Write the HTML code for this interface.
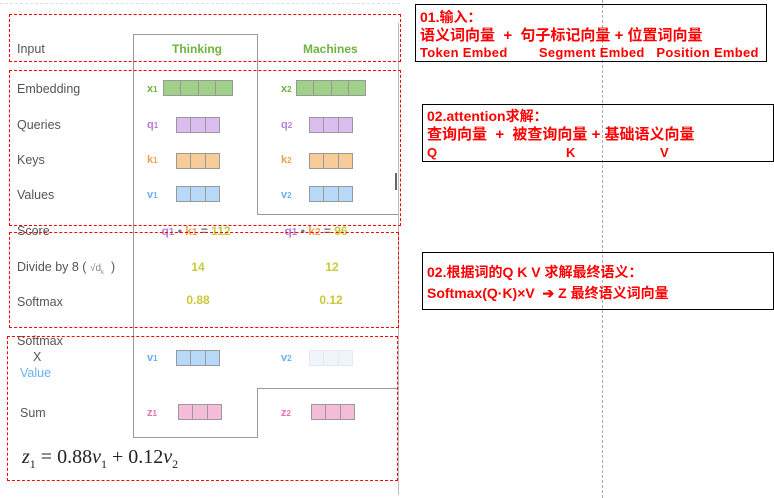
<!DOCTYPE html><html><head><meta charset="utf-8"><style>
body{margin:0;width:774px;height:498px;background:#fff;position:relative;overflow:hidden;font-family:"Liberation Sans","Noto Sans CJK SC",sans-serif}
.a{position:absolute}
.l{position:absolute;left:17px;font-size:12.5px;color:#555;line-height:14px}
.rd{position:absolute;border:1px dashed #f00}
.g{position:absolute;background:#999}
.bar{position:absolute;display:flex;border:1px solid #999;height:14px}
.bar i{flex:1;border-right:1px solid #999}.bar i:last-child{border-right:0}
.v{position:absolute;font-size:11px;font-weight:bold;line-height:14px}
.v small{font-size:8px}
.c{position:absolute;font-size:12px;font-weight:bold;color:#c9c93a;transform:translateX(-50%);line-height:14px}
.bx{position:absolute;border:1px solid #000;color:#f00;font-weight:bold;font-family:"Liberation Sans","Noto Sans CJK SC",sans-serif}
.bx div{position:absolute;white-space:pre;left:4px}
</style></head><body>
<div class="a" style="left:0;top:3px;width:400px;border-top:1px dashed #ddd"></div>
<div class="a" style="left:602px;top:0;height:498px;border-left:1px dashed #aaa"></div>
<div class="g" style="left:133px;top:34px;width:124px;height:1px"></div>
<div class="g" style="left:133px;top:34px;width:1px;height:403px"></div>
<div class="g" style="left:257px;top:34px;width:1px;height:180px"></div>
<div class="g" style="left:257px;top:214px;width:142px;height:1px"></div>
<div class="g" style="left:133px;top:437px;width:125px;height:1px"></div>
<div class="g" style="left:257px;top:388px;width:1px;height:50px"></div>
<div class="g" style="left:257px;top:388px;width:142px;height:1px"></div>
<div class="g" style="left:398px;top:23px;width:1px;height:472px;background:#bbb"></div>
<div class="g" style="left:395px;top:173px;width:2px;height:17px;background:#666"></div>
<div class="l" style="top:42px">Input</div>
<div class="l" style="top:82px">Embedding</div>
<div class="l" style="top:118px">Queries</div>
<div class="l" style="top:153px">Keys</div>
<div class="l" style="top:188px">Values</div>
<div class="l" style="top:224px">Score</div>
<div class="l" style="top:260px">Divide by 8 ( <span style="font-size:10px;color:#888">√d<sub style="font-size:6px">k</sub></span> &nbsp;)</div>
<div class="l" style="top:295px">Softmax</div>
<div class="l" style="top:334px">Softmax</div>
<div class="l" style="top:350px;left:33px">X</div>
<div class="l" style="top:366px;left:20px;color:#6ab0f0">Value</div>
<div class="l" style="top:406px;left:20px">Sum</div>
<div class="a" style="left:172px;top:42px;font-size:12px;font-weight:bold;color:#6db33f">Thinking</div>
<div class="a" style="left:303px;top:42px;font-size:12px;font-weight:bold;color:#6db33f">Machines</div>
<div class="v" style="left:147px;top:82px;color:#6db33f">x<small>1</small></div>
<div class="bar" style="left:163px;top:80px;width:68px;background:#9fd18a"><i></i><i></i><i></i><i></i></div>
<div class="v" style="left:281px;top:82px;color:#6db33f">x<small>2</small></div>
<div class="bar" style="left:296px;top:80px;width:68px;background:#9fd18a"><i></i><i></i><i></i><i></i></div>
<div class="v" style="left:147px;top:118px;color:#b57edc">q<small>1</small></div>
<div class="bar" style="left:176px;top:117px;width:42px;background:#dcbdf0"><i></i><i></i><i></i></div>
<div class="v" style="left:281px;top:118px;color:#b57edc">q<small>2</small></div>
<div class="bar" style="left:309px;top:117px;width:42px;background:#dcbdf0"><i></i><i></i><i></i></div>
<div class="v" style="left:147px;top:153px;color:#f0a050">k<small>1</small></div>
<div class="bar" style="left:176px;top:153px;width:42px;background:#f8cc98"><i></i><i></i><i></i></div>
<div class="v" style="left:281px;top:153px;color:#f0a050">k<small>2</small></div>
<div class="bar" style="left:309px;top:153px;width:42px;background:#f8cc98"><i></i><i></i><i></i></div>
<div class="v" style="left:147px;top:188px;color:#6ab0f0">v<small>1</small></div>
<div class="bar" style="left:176px;top:186px;width:42px;background:#b8d8f8"><i></i><i></i><i></i></div>
<div class="v" style="left:281px;top:188px;color:#6ab0f0">v<small>2</small></div>
<div class="bar" style="left:309px;top:186px;width:42px;background:#b8d8f8"><i></i><i></i><i></i></div>
<div class="c" style="left:196px;top:224px"><span style="color:#b57edc">q<small>1</small></span> <span style="color:#777">•</span> <span style="color:#f0a050">k<small>1</small></span> <span style="color:#777">=</span> 112</div>
<div class="c" style="left:316px;top:224px"><span style="color:#b57edc">q<small>1</small></span> <span style="color:#777">•</span> <span style="color:#f0a050">k<small>2</small></span> <span style="color:#777">=</span> 96</div>
<div class="c" style="left:198px;top:260px">14</div>
<div class="c" style="left:332px;top:260px">12</div>
<div class="c" style="left:198px;top:293px">0.88</div>
<div class="c" style="left:331px;top:293px">0.12</div>
<div class="v" style="left:147px;top:351px;color:#6ab0f0">v<small>1</small></div>
<div class="bar" style="left:176px;top:350px;width:42px;background:#b8d8f8"><i></i><i></i><i></i></div>
<div class="v" style="left:281px;top:351px;color:#6ab0f0">v<small>2</small></div>
<div class="bar" style="left:309px;top:350px;width:42px;background:#f0f5fc;border-color:#e6eaf0"><i style="border-color:#e6eaf0"></i><i style="border-color:#e6eaf0"></i><i></i></div>
<div class="v" style="left:147px;top:406px;color:#e870b0">z<small>1</small></div>
<div class="bar" style="left:178px;top:404px;width:42px;background:#f4bcd8"><i></i><i></i><i></i></div>
<div class="v" style="left:281px;top:406px;color:#e870b0">z<small>2</small></div>
<div class="bar" style="left:311px;top:404px;width:42px;background:#f4bcd8"><i></i><i></i><i></i></div>
<div class="a" style="left:22px;top:446px;font-family:'Liberation Serif',serif;font-size:20px;color:#222"><i>z</i><sub style="font-size:12px">1</sub> = 0.88<i>v</i><sub style="font-size:12px">1</sub> + 0.12<i>v</i><sub style="font-size:12px">2</sub></div>
<div class="rd" style="left:9px;top:14px;width:390px;height:46px"></div>
<div class="rd" style="left:9px;top:70px;width:390px;height:154px"></div>
<div class="rd" style="left:9px;top:232px;width:388px;height:94px"></div>
<div class="rd" style="left:7px;top:336px;width:389px;height:143px"></div>
<div class="bx" style="left:415px;top:4px;width:350px;height:56px">
<div style="top:2px;font-size:14px">01.输入：</div>
<div style="top:19px;font-size:15px">语义词向量  +  句子标记向量 + 位置词向量</div>
<div style="top:40px;font-size:13px;letter-spacing:0.3px">Token Embed        Segment Embed   Position Embed</div></div>
<div class="bx" style="left:422px;top:104px;width:350px;height:56px">
<div style="top:1px;font-size:14px">02.attention求解：</div>
<div style="top:18px;font-size:15px">查询向量  +  被查询向量 + 基础语义向量</div>
<div style="top:40px;font-size:13px">Q</div><div style="top:40px;left:143px;font-size:13px">K</div><div style="top:40px;left:237px;font-size:13px">V</div></div>
<div class="bx" style="left:422px;top:252px;width:350px;height:56px">
<div style="top:9px;font-size:14px">02.根据词的Q K V 求解最终语义：</div>
<div style="top:30px;font-size:14px">Softmax(Q·K)×V  ➔ Z 最终语义词向量</div></div>
</body></html>
